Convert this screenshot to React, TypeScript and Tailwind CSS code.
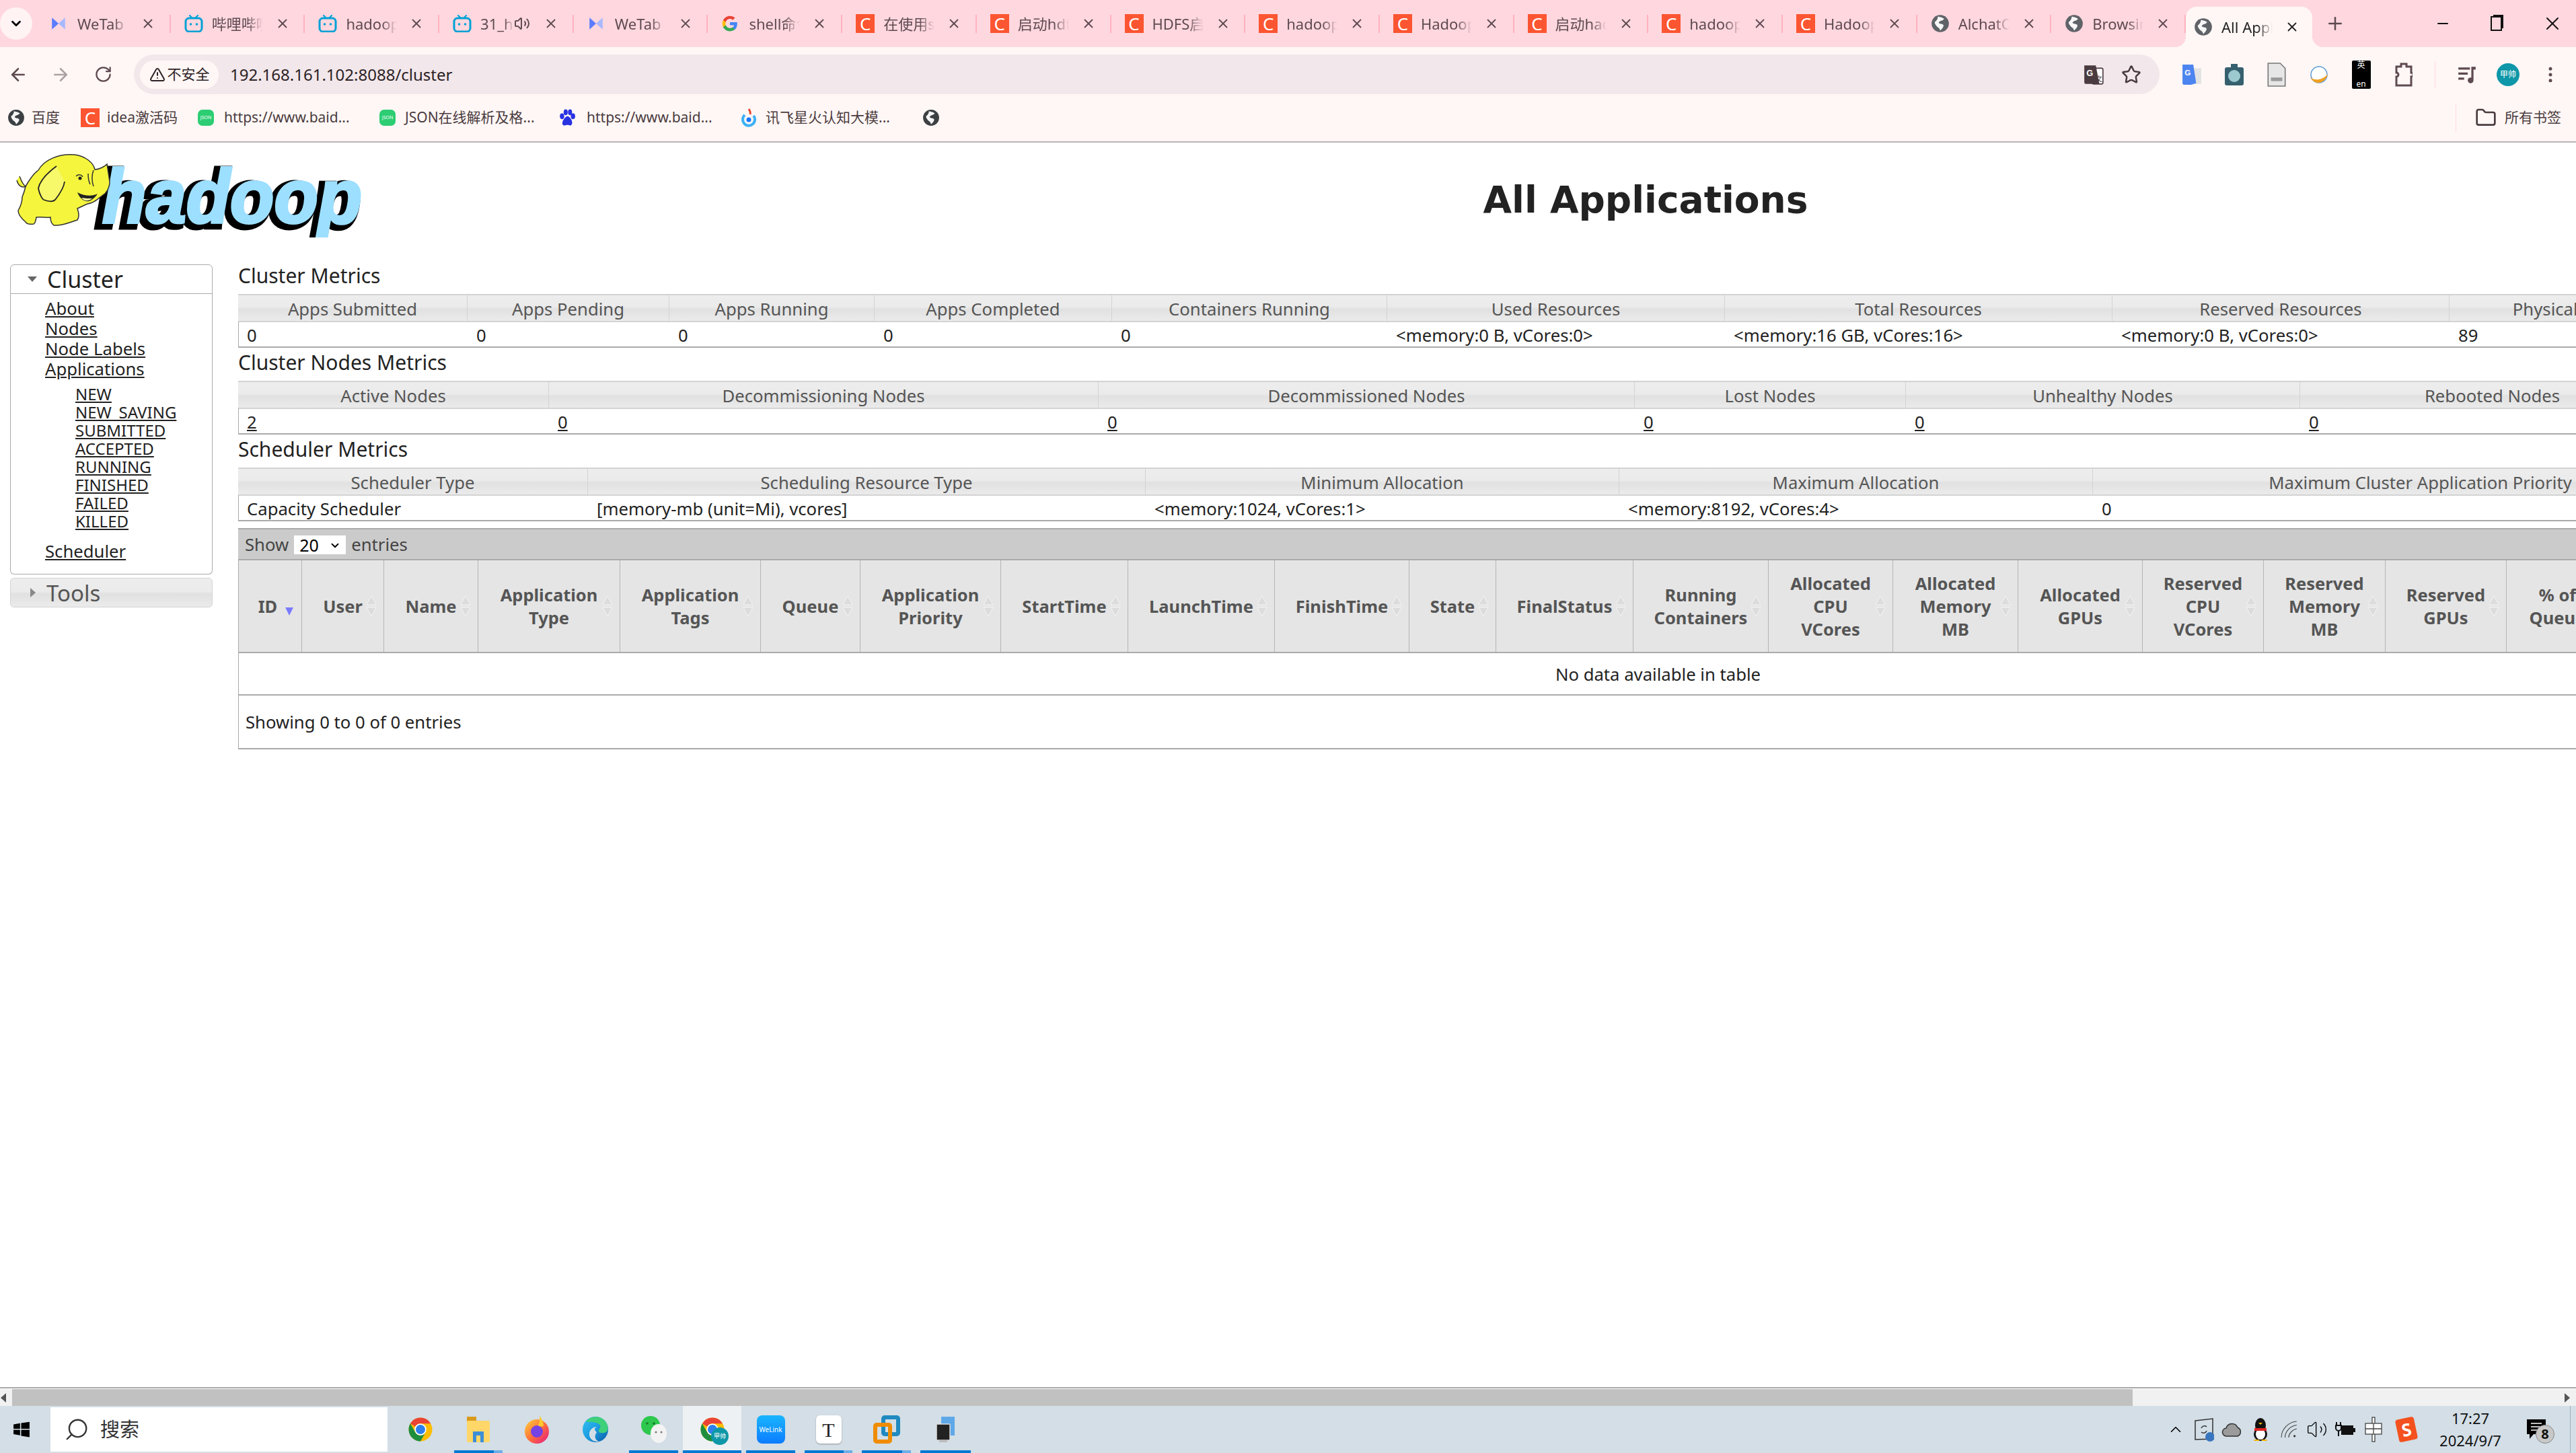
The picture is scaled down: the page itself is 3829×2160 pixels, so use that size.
import { ArrowLeft, ArrowRight, ChevronDown, ChevronUp, EllipsisVertical, Folder, Minus, Plus, RotateCw, Search, Star, TriangleAlert, Volume2, X } from "lucide-react";
import type { ReactNode } from "react";

const Csdn = ({ className = "h-[28px] w-[28px] text-[26px]" }: { className?: string }) => (
  <span className={`flex shrink-0 items-center justify-center bg-[#fc5531] leading-none text-white ${className}`}>C</span>
);

const WeTab = () => (
  <svg viewBox="0 0 24 24" className="h-[26px] w-[26px] shrink-0">
    <path d="M3 4l9 8-9 8z" fill="#5b7cff" />
    <path d="M21 4l-9 8 9 8z" fill="#a9b8ff" />
  </svg>
);

const Bili = () => (
  <svg viewBox="0 0 28 26" className="h-[26px] w-[28px] shrink-0" fill="none">
    <path d="M8 1l4 4M20 1l-4 4" stroke="#00a1d6" strokeWidth="2" strokeLinecap="round" />
    <rect x="2" y="5" width="24" height="20" rx="5" stroke="#00a1d6" strokeWidth="3" />
    <circle cx="9.5" cy="14" r="1.8" fill="#00a1d6" />
    <circle cx="18.5" cy="14" r="1.8" fill="#00a1d6" />
  </svg>
);

const Google = () => (
  <svg viewBox="0 0 48 48" className="h-[26px] w-[26px] shrink-0">
    <path fill="#4285f4" d="M44 24.5c0-1.500-.1-2.900-.4-4.300H24v8.200h11.200c-.5 2.600-2 4.900-4.200 6.400v5.300h6.800C41.800 36.900 44 31.200 44 24.500z" />
    <path fill="#34a853" d="M24 45c5.700 0 10.400-1.900 13.800-5.100L31 34.600c-1.900 1.300-4.300 2-7 2-5.400 0-10-3.600-11.600-8.500H5.400v5.400C8.800 40.300 15.900 45 24 45z" />
    <path fill="#fbbc05" d="M12.400 28.100c-.9-2.600-.9-5.500 0-8.100v-5.400H5.400c-2.900 5.900-2.900 13 0 18.900z" />
    <path fill="#ea4335" d="M24 11.300c3 0 5.800 1 7.900 3.100l6-6C34.300 5 29.500 3 24 3 15.900 3 8.800 7.700 5.400 14.600l7 5.400C14 15 18.600 11.300 24 11.300z" />
  </svg>
);

const Globe = ({ className = "h-[28px] w-[28px]", color = "#5f6368" }: { className?: string; color?: string }) => (
  <svg viewBox="0 0 24 24" className={`shrink-0 ${className}`}>
    <circle cx="12" cy="12" r="11" fill={color} />
    <path d="M9 3c3 1 6 1 8 3-2 3-6 2-7 5 1 2 5 1 6 3 1 2-2 5-4 7-1-3-2-4-4-5-1-2-3-3-3-6 2-1 4-4 4-7z" fill="#fff" opacity="0.95" />
  </svg>
);

const ChromeLogo = ({ className = "h-[42px] w-[42px]" }: { className?: string }) => (
  <svg viewBox="0 0 48 48" className={className}>
    <circle cx="24" cy="24" r="20" fill="#fbbc04" />
    <path d="M24 4a20 20 0 0 1 17.320 10H24a10 10 0 0 0-8.660 5L6.680 14A20 20 0 0 1 24 4z" fill="#ea4335" />
    <path d="M6.680 14A20 20 0 0 0 24 44l8.660-15a10 10 0 0 1-17.320 0z" fill="#1e8e3e" />
    <circle cx="24" cy="24" r="10" fill="#fff" />
    <circle cx="24" cy="24" r="8" fill="#2f80ed" />
  </svg>
);

type TabInfo = { icon: ReactNode; label: string; audio?: boolean; active?: boolean };

const tabs: TabInfo[] = [
  { icon: <WeTab />, label: "WeTab 新标签页" },
  { icon: <Bili />, label: "哔哩哔哩" },
  { icon: <Bili />, label: "hadoop集群" },
  { icon: <Bili />, label: "31_hadoop", audio: true },
  { icon: <WeTab />, label: "WeTab 新标签页" },
  { icon: <Google />, label: "shell命令" },
  { icon: <Csdn />, label: "在使用shell" },
  { icon: <Csdn />, label: "启动hdfs" },
  { icon: <Csdn />, label: "HDFS启动" },
  { icon: <Csdn />, label: "hadoop集群" },
  { icon: <Csdn />, label: "Hadoop集群" },
  { icon: <Csdn />, label: "启动hadoop" },
  { icon: <Csdn />, label: "hadoop启动" },
  { icon: <Csdn />, label: "Hadoop启动" },
  { icon: <Globe />, label: "AlchatOS" },
  { icon: <Globe />, label: "Browsing" },
  { icon: <Globe />, label: "All Applications", active: true },
];

function Tab({ icon, label, audio, active }: TabInfo) {
  return (
    <div className={`relative flex shrink-0 items-center ${active ? "h-[60px] w-[188px] self-end rounded-t-[16px] bg-[#fff7f5] pl-[12px] text-[#222]" : "h-full w-[199.7px] pl-[20px] text-[#5e4a51]"}`}>
      <span className="flex w-[41px] shrink-0 items-center">{icon}</span>
      <span className={`overflow-hidden whitespace-nowrap text-[22px] [mask-image:linear-gradient(to_right,black_70%,transparent)] ${audio ? "w-[50px]" : "w-[76px]"}`}>{label}</span>
      {audio && <Volume2 size={24} className="shrink-0" />}
      <X size={22} className={`shrink-0 ${audio ? "ml-[20px]" : "ml-[18px]"}`} />
      {!active && <span className="absolute right-0 top-[22px] h-[27px] w-[2px] bg-[#ffb2bf]" />}
      {active && (
        <>
          <span className="absolute bottom-0 left-[-16px] h-[16px] w-[16px] bg-[radial-gradient(circle_at_0_0,transparent_16px,#fff7f5_16px)]" />
          <span className="absolute bottom-0 right-[-16px] h-[16px] w-[16px] bg-[radial-gradient(circle_at_100%_0,transparent_16px,#fff7f5_16px)]" />
        </>
      )}
    </div>
  );
}

function TabStrip() {
  return (
    <div className="flex h-[70px] shrink-0 bg-[#ffd7df]">
      <div className="flex w-[54px] shrink-0 items-center pl-0">
        <span className="flex h-[48px] w-[48px] items-center justify-center rounded-full bg-[#fff3f4]">
          <ChevronDown size={22} strokeWidth={3} />
        </span>
      </div>
      {tabs.map((t, i) => (
        <Tab key={i} {...t} />
      ))}
      <div className="flex w-[68px] shrink-0 items-center justify-center text-[#5e4a51]">
        <Plus size={30} />
      </div>
      <div className="flex flex-1 items-center pl-[87px] text-[#111]">
        <span className="flex w-[77px] items-center justify-center"><Minus size={24} /></span>
        <span className="flex w-[83px] items-center justify-center">
          <span className="relative h-[22px] w-[17px] border-2 border-[#111] bg-[#ffd7df] shadow-[3px_-3px_0_-1px_#111]" />
        </span>
        <span className="flex w-[83px] items-center justify-center"><X size={32} strokeWidth={1.5} /></span>
      </div>
    </div>
  );
}

function TranslateIcon() {
  return (
    <svg viewBox="0 0 30 30" className="h-[32px] w-[32px]">
      <rect x="13" y="6" width="15" height="22" rx="2" fill="#fff" stroke="#4a3b40" strokeWidth="1.500" />
      <path d="M2 2h16l5 26H5a3 3 0 0 1-3-3z" fill="#4a3b40" />
      <text x="5" y="17" fontSize="12" fontWeight="700" fill="#fff" fontFamily="Liberation Sans, sans-serif">G</text>
      <text x="17" y="24" fontSize="10" fill="#4a3b40" fontFamily="Noto Sans CJK SC, sans-serif">文</text>
    </svg>
  );
}

function Toolbar() {
  return (
    <div className="flex h-[70px] shrink-0 items-start bg-[#fff7f5] pt-[11px]">
      <div className="flex h-[59px] items-center text-[#5e4a51]">
        <span className="flex w-[54px] justify-center"><ArrowLeft size={30} /></span>
        <span className="flex w-[72px] justify-center text-[#aaa1a4]"><ArrowRight size={30} /></span>
        <span className="flex w-[54px] justify-center"><RotateCw size={27} /></span>
      </div>
      <div className="ml-[19px] flex h-[59px] w-[3011px] items-center rounded-full bg-[#f2e7ea]">
        <span className="ml-[9px] flex h-[42px] w-[117px] items-center justify-center gap-[3px] rounded-full bg-[#fff7f5] text-[21px] text-[#2c2225]">
          <TriangleAlert size={24} />
          不安全
        </span>
        <span className="ml-[17px] text-[24px] leading-none text-[#2c2225]">192.168.161.102:8088/cluster</span>
        <span className="ml-auto flex w-[56px] justify-center"><TranslateIcon /></span>
        <span className="mr-[14px] flex w-[56px] justify-center text-[#4a3b40]"><Star size={30} /></span>
      </div>
      <div className="ml-[16px] flex h-[59px] items-center">
        <span className="flex w-[63px] justify-center">
          <svg viewBox="0 0 28 30" className="h-[34px] w-[30px]">
            <rect x="12" y="6" width="15" height="22" fill="#e3e3e3" />
            <path d="M1 1h15l4 26-7 2H3a2 2 0 0 1-2-2z" fill="#4d85f0" />
            <text x="4" y="16" fontSize="11" fontWeight="700" fill="#fff" fontFamily="Liberation Sans, sans-serif">G</text>
          </svg>
        </span>
        <span className="flex w-[63px] justify-center">
          <svg viewBox="0 0 30 34" className="h-[36px] w-[30px]">
            <rect x="10" y="1" width="10" height="6" fill="#37606e" />
            <rect x="1" y="6" width="28" height="27" rx="3" fill="#37606e" />
            <circle cx="15" cy="19" r="9" fill="#9cc8d0" />
          </svg>
        </span>
        <span className="flex w-[63px] justify-center">
          <svg viewBox="0 0 26 34" className="h-[36px] w-[28px]">
            <path d="M1 1h17l7 7v25H1z" fill="#e6e6e6" stroke="#777" strokeWidth="1.500" />
            <rect x="5" y="21" width="16" height="5" fill="#999" />
          </svg>
        </span>
        <span className="flex w-[63px] justify-center">
          <svg viewBox="0 0 30 30" className="h-[32px] w-[30px]" fill="none">
            <circle cx="15" cy="15" r="12" fill="#fff" stroke="#5b9bd5" strokeWidth="1.500" />
            <path d="M2 19c6 5 18 5 26-5-2 9-10 14-16 13-4-1-8-4-10-8z" fill="#f0a020" />
          </svg>
        </span>
        <span className="flex w-[63px] justify-center">
          <span className="flex h-[42px] w-[28px] flex-col items-center justify-between rounded-[2px] bg-black py-[1px] text-[12px] leading-none text-white">
            <span>英</span>
            <span>en</span>
          </span>
        </span>
        <span className="flex w-[63px] justify-center">
          <svg viewBox="0 0 26 36" className="h-[40px] w-[26px]" fill="none" stroke="#5e4a51" strokeWidth="3">
            <path d="M9 6V2h8v4h7v9a3 3 0 0 1 0 6v13H2V21a3 3 0 0 0 0-6V6z" />
          </svg>
        </span>
        <span className="ml-[15px] h-[40px] w-[1px] bg-[#ffd7df]" />
        <span className="ml-[15px] flex w-[62px] justify-center pl-[1px]">
          <svg viewBox="0 0 28 28" className="h-[32px] w-[30px]" fill="#5e4a51">
            <path d="M2 4h16v3H2zM2 11h13v3H2zM2 18h8v3H2z" />
            <path d="M20 3h6v4h-3v15a4 4 0 1 1-3-4z" />
          </svg>
        </span>
        <span className="flex w-[62px] justify-center">
          <span className="flex h-[34px] w-[34px] items-center justify-center rounded-full bg-[#0e97a8] text-[12px] text-white">甲帅</span>
        </span>
        <span className="flex w-[64px] justify-center text-[#5e4a51]"><EllipsisVertical size={30} /></span>
      </div>
    </div>
  );
}

function Bookmarks() {
  return (
    <div className="flex h-[72px] shrink-0 items-center border-b-2 border-[#b9b5b5] bg-[#fff7f5] text-[21px] text-[#4a3b40]">
      <span className="flex w-[120px] items-center gap-[10px] pl-[11px]"><Globe color="#3c4043" className="h-[26px] w-[26px]" />百度</span>
      <span className="flex w-[174px] items-center gap-[11px]"><Csdn />idea激活码</span>
      <span className="flex w-[270px] items-center gap-[15px]">
        <span className="flex h-[24px] w-[24px] items-center justify-center rounded-[7px] bg-[#2ccd73] text-[7px] text-white">JSON</span>
        https://www.baid...
      </span>
      <span className="flex w-[266px] items-center gap-[14px]">
        <span className="flex h-[24px] w-[24px] items-center justify-center rounded-[7px] bg-[#2ccd73] text-[7px] text-white">JSON</span>
        JSON在线解析及格...
      </span>
      <span className="flex w-[271px] items-center gap-[16px]">
        <svg viewBox="0 0 24 24" className="h-[28px] w-[26px]" fill="#2932e1">
          <ellipse cx="5" cy="10" rx="3" ry="4" />
          <ellipse cx="10" cy="4.500" rx="2.800" ry="4" />
          <ellipse cx="16" cy="4.500" rx="2.800" ry="4" />
          <ellipse cx="20" cy="10" rx="3" ry="4" />
          <path d="M12.500 10c3 0 8 7 6 11-2 3-4 1-6 1s-5 2-7-1c-1-4 4-11 7-11z" />
        </svg>
        https://www.baid...
      </span>
      <span className="flex w-[270px] items-center gap-[13px]">
        <svg viewBox="0 0 24 28" className="h-[34px] w-[24px]" fill="none">
          <path d="M12 1c2 3 3 5 2 8" stroke="#e8452c" strokeWidth="3" />
          <path d="M6 10a9 9 0 1 0 13 1" stroke="#3db1f5" strokeWidth="4" />
          <circle cx="12" cy="17" r="3.500" fill="#1677ff" />
        </svg>
        讯飞星火认知大模...
      </span>
      <Globe color="#3c4043" className="h-[26px] w-[26px]" />
      <span className="ml-auto flex items-center pr-[22px]">
        <span className="h-[40px] w-[1px] bg-[#ffd7df]" />
        <Folder size={32} className="ml-[28px]" />
        <span className="ml-[12px]">所有书签</span>
      </span>
    </div>
  );
}

function Elephant() {
  return (
    <g>
      <path d="M21 49C28 37 34 29 40 25C48 10 70 0 94 2C110 4 122 14 124 24C130 24 138 20 142 16L146 42C146 52 140 60 136 62C128 68 122 74 113 75L98 82C101 90 100 96 98 99C88 102 76 108 63 107C59 104 58 100 58 95C52 96 44 94 37 95C36 100 36 103 33 105C26 106 22 104 21 102C14 96 10 90 10 85C14 78 16 70 16 65C18 60 20 54 21 49Z" fill="#f4f53c" stroke="#333" strokeWidth="1.500" />
      <path d="M67 19C52 30 42 42 40 52C42 62 46 68 48 69C56 72 62 72 65 69C72 60 78 50 79 42" fill="#f7f86a" stroke="#222" strokeWidth="1.800" />
      <path d="M8 40C10 48 16 52 21 49C16 46 14 38 12 34" fill="#f4f53c" stroke="#333" strokeWidth="1.500" />
      <path d="M96 34c3-3 8-3 10 1M122 25c-3 8-2 18 0 24M114 30c0 6 1 12 3 16" fill="none" stroke="#333" strokeWidth="1.500" />
      <circle cx="102" cy="37" r="2.500" fill="#222" />
      <path d="M98 58c4 10 12 16 20 12 4-3 8-6 10-10-8 4-18 4-30-2z" fill="#222" />
      <path d="M104 66c4 5 10 6 16 1-6 0-10 0-16-1z" fill="#f9f9a0" />
    </g>
  );
}

function HadoopLogo() {
  return (
    <svg viewBox="0 0 525 125" className="h-[125px] w-[525px] shrink-0">
      <text x="128" y="107" textLength="388" lengthAdjust="spacingAndGlyphs" fontFamily="Liberation Sans, sans-serif" fontSize="114" fontStyle="italic" fontWeight="700" fill="#000" stroke="#000" strokeWidth="13">hadoop</text>
      <text x="135" y="103" textLength="386" lengthAdjust="spacingAndGlyphs" fontFamily="Liberation Sans, sans-serif" fontSize="114" fontStyle="italic" fontWeight="700" fill="#9ddfff" stroke="#9ddfff" strokeWidth="4">hadoop</text>
      <Elephant />
    </svg>
  );
}

const metricHead = "flex h-[38px] items-center justify-center overflow-hidden whitespace-nowrap border-r border-[#d3d3d3] bg-[linear-gradient(to_bottom,#ededed_0%,#ebebeb_45%,#e1e1e1_55%,#ebebeb_100%)] pt-[3px] text-[#555]";
const metricCell = "flex h-[36px] items-center whitespace-nowrap pl-[12px] pt-[4px]";

function MetricsTable({ title, cols, head, cells, links }: { title: string; cols: string; head: string[]; cells: string[]; links?: boolean }) {
  return (
    <div className="w-[4300px]">
      <div className="flex h-[49px] items-center pb-[5px] text-[30px] leading-none">{title}</div>
      <div className={`grid border-t-2 border-[#d3d3d3] ${cols}`}>
        {head.map((h) => (
          <div key={h} className={metricHead}>{h}</div>
        ))}
      </div>
      <div className={`grid border-l border-t-2 border-b-2 border-l-[#aaa] border-t-[#d3d3d3] border-b-[#aaa] ${cols}`}>
        {cells.map((c, i) => (
          <div key={i} className={metricCell}>{links ? <a className="underline">{c}</a> : c}</div>
        ))}
      </div>
    </div>
  );
}

function SortIcon({ active }: { active?: boolean }) {
  if (active) {
    return (
      <svg viewBox="0 0 14 16" className="absolute right-[12px] top-[calc(50%+1px)] h-[14px] w-[12px]">
        <path d="M0 1h14L7 15z" fill="#7b7bff" />
      </svg>
    );
  }
  return (
    <svg viewBox="0 0 16 32" className="absolute right-[10px] top-1/2 h-[32px] w-[16px] -translate-y-1/2">
      <path d="M8 1l7 13H1z" fill="#dcdcdc" stroke="#f4f4f4" />
      <path d="M8 31l7-13H1z" fill="#dcdcdc" stroke="#f4f4f4" />
    </svg>
  );
}

const appColumns: string[][] = [
  ["ID"], ["User"], ["Name"], ["Application", "Type"], ["Application", "Tags"], ["Queue"], ["Application", "Priority"],
  ["StartTime"], ["LaunchTime"], ["FinishTime"], ["State"], ["FinalStatus"], ["Running", "Containers"],
  ["Allocated", "CPU", "VCores"], ["Allocated", "Memory", "MB"], ["Allocated", "GPUs"],
  ["Reserved", "CPU", "VCores"], ["Reserved", "Memory", "MB"], ["Reserved", "GPUs"], ["% of", "Queue"], ["% of", "Cluster"],
];

function AppsTable() {
  return (
    <div className="mt-[10px] w-[4300px]">
      <div className="flex h-[48px] items-center gap-[8px] border-t-2 border-b-2 border-[#aaa] bg-[#cbcbcb] pl-[10px] pt-[2px] text-[#444]">
        Show
        <span className="relative flex">
          <select defaultValue="20" className="h-[28px] w-[77px] appearance-none bg-white pl-[8px] text-[25px] leading-none text-black outline-none">
            <option>20</option>
          </select>
          <ChevronDown size={18} strokeWidth={2.500} className="pointer-events-none absolute right-[7px] top-[6px] text-black" />
        </span>
        entries
      </div>
      <div className="grid h-[138px] grid-cols-[94px_122px_140px_211px_209px_148px_209px_189px_218px_200px_129px_204px_201px_185px_186px_185px_180px_181px_180px_152px_604px] border-b-2 border-l border-[#aaa] bg-[#e5e5e5] text-[25.5px] font-bold leading-[34px] text-[#555]">
        {appColumns.map((lines, i) => (
          <div key={i} className={`relative flex flex-col items-center justify-center border-r border-[#b5b5b5] ${i === 0 ? "pr-[7px]" : ""}`}>
            {lines.map((l) => (
              <span key={l}>{l}</span>
            ))}
            <SortIcon active={i === 0} />
          </div>
        ))}
      </div>
      <div className="flex h-[63px] w-[4220px] items-center justify-center border-b-2 border-l border-[#aaa] pt-[2px]">No data available in table</div>
      <div className="flex h-[80px] items-center border-b-2 border-l border-[#aaa] pl-[10px] pt-[2px]">Showing 0 to 0 of 0 entries</div>
    </div>
  );
}

function Sidebar() {
  const apps = ["NEW", "NEW_SAVING", "SUBMITTED", "ACCEPTED", "RUNNING", "FINISHED", "FAILED", "KILLED"];
  return (
    <aside className="ml-[15px] w-[301px] shrink-0">
      <div className="flex h-[44px] items-center rounded-t-[6px] border border-[#aaa] pl-[25px] text-[34px] leading-none text-[#222]">
        <svg viewBox="0 0 14 8" className="mr-[15px] h-[8px] w-[14px]"><path d="M0 0h14L7 8z" fill="#666" /></svg>
        Cluster
      </div>
      <div className="h-[417px] rounded-b-[6px] border border-t-0 border-[#aaa] pl-[51px] pt-[7px]">
        {["About", "Nodes", "Node Labels", "Applications"].map((l) => (
          <a key={l} className="block h-[30px] leading-[30px] underline">{l}</a>
        ))}
        <div className="ml-[45px] mt-[8px]">
          {apps.map((a) => (
            <a key={a} className="block h-[27px] text-[24px] leading-[27px] underline">{a}</a>
          ))}
        </div>
        <a className="mt-[17px] block h-[30px] leading-[30px] underline">Scheduler</a>
      </div>
      <div className="mt-[5px] flex h-[44px] items-center rounded-[6px] border border-[#d3d3d3] bg-[linear-gradient(to_bottom,#ededed_0%,#ebebeb_45%,#e1e1e1_55%,#ebebeb_100%)] pl-[29px] text-[33px] leading-none text-[#555]">
        <svg viewBox="0 0 8 14" className="mr-[16px] h-[14px] w-[8px]"><path d="M0 0l8 7-8 7z" fill="#888" /></svg>
        Tools
      </div>
    </aside>
  );
}

function Page() {
  return (
    <div className="min-h-0 flex-1 overflow-hidden bg-white text-[25.7px] leading-[30px] text-[#222]">
      <div className="flex h-[181px] w-[4350px] items-start pl-[17px] pt-[16px]">
        <HadoopLogo />
        <h1 className="flex-1 pt-[37px] text-center font-['DejaVu_Sans',sans-serif] text-[55px] font-bold leading-[64px] text-[#222]">All Applications</h1>
      </div>
      <div className="flex items-start">
        <Sidebar />
        <div className="ml-[38px] mt-[-5px] flex flex-col">
          <MetricsTable
            title="Cluster Metrics"
            cols="grid-cols-[341px_300px_305px_353px_409px_502px_576px_501px_450px]"
            head={["Apps Submitted", "Apps Pending", "Apps Running", "Apps Completed", "Containers Running", "Used Resources", "Total Resources", "Reserved Resources", "Physical Mem Used %"]}
            cells={["0", "0", "0", "0", "0", "<memory:0 B, vCores:0>", "<memory:16 GB, vCores:16>", "<memory:0 B, vCores:0>", "89"]}
          />
          <MetricsTable
            title="Cluster Nodes Metrics"
            cols="grid-cols-[462px_817px_797px_403px_586px_572px]"
            head={["Active Nodes", "Decommissioning Nodes", "Decommissioned Nodes", "Lost Nodes", "Unhealthy Nodes", "Rebooted Nodes"]}
            cells={["2", "0", "0", "0", "0", "0"]}
            links
          />
          <MetricsTable
            title="Scheduler Metrics"
            cols="grid-cols-[520px_829px_704px_704px_974px]"
            head={["Scheduler Type", "Scheduling Resource Type", "Minimum Allocation", "Maximum Allocation", "Maximum Cluster Application Priority"]}
            cells={["Capacity Scheduler", "[memory-mb (unit=Mi), vcores]", "<memory:1024, vCores:1>", "<memory:8192, vCores:4>", "0"]}
          />
          <AppsTable />
        </div>
      </div>
    </div>
  );
}

function PageScrollbar() {
  return (
    <div className="h-[28px] shrink-0 border-t-2 border-[#aaa] bg-white pt-[1px]">
      <div className="flex h-[25px] items-center bg-[#f1f1f1]">
        <svg viewBox="0 0 8 14" className="ml-[1px] mr-[9px] h-[14px] w-[8px]"><path d="M8 0v14L0 7z" fill="#555" /></svg>
        <div className="h-full w-[3152px] bg-[#c1c1c1]" />
        <svg viewBox="0 0 8 14" className="ml-auto mr-[9px] h-[14px] w-[8px]"><path d="M0 0v14l8-7z" fill="#555" /></svg>
      </div>
    </div>
  );
}

function TaskSlot({ width, active, children }: { width: string; active?: boolean; children: ReactNode }) {
  return (
    <div className={`relative flex h-full items-center justify-center ${width} ${active ? "bg-[#edf1f4]" : ""}`}>
      {children}
    </div>
  );
}

function Underline({ light }: { light?: boolean }) {
  return (
    <span className="absolute bottom-0 left-[7px] right-[7px] flex h-[4px]">
      <span className="flex-1 bg-[#0078d4]" />
      {light && <span className="w-[13px] bg-[#6caee8]" />}
    </span>
  );
}

function Taskbar() {
  return (
    <div className="flex h-[70px] shrink-0 items-center bg-[#d3dee6]">
      <div className="flex w-[75px] justify-center pr-[12px]">
        <svg viewBox="0 0 24 24" className="h-[32px] w-[26px]" fill="#000">
          <path d="M1 5l9-1.500V11H1zM11.500 3.200L23 1.500V11H11.500zM1 12.500h9V20l-9-1.500zM11.500 12.500H23v10l-11.500-1.700z" />
        </svg>
      </div>
      <div className="flex h-[66px] w-[501px] items-center bg-white pl-[20px] text-[29px] text-[#333]">
        <Search size={38} strokeWidth={1.5} className="-scale-x-100" />
        <span className="ml-[16px]">搜索</span>
      </div>
      <div className="ml-[5px] flex h-full items-center">
        <TaskSlot width="w-[87px]"><ChromeLogo /></TaskSlot>
        <TaskSlot width="w-[86px]">
          <svg viewBox="0 0 40 42" className="h-[42px] w-[40px]">
            <path d="M3 2h14v10H3z" fill="#d99a1c" />
            <rect x="3" y="8" width="34" height="32" rx="2" fill="#ffd768" />
            <path d="M12 24h16v16h-5V30h-6v10h-5z" fill="#3d8fd6" />
          </svg>
          <Underline light />
        </TaskSlot>
        <TaskSlot width="w-[87px]">
          <svg viewBox="0 0 40 44" className="h-[44px] w-[40px]">
            <defs>
              <linearGradient id="fx" x1="0" y1="0" x2="1" y2="1">
                <stop offset="0" stopColor="#ffd43b" />
                <stop offset="0.5" stopColor="#ff7139" />
                <stop offset="1" stopColor="#e31587" />
              </linearGradient>
            </defs>
            <circle cx="20" cy="25" r="18" fill="url(#fx)" />
            <path d="M24 1c3 6 6 9 6 16l-10 2c3-5 5-10 4-18z" fill="#ffc92e" />
            <circle cx="20" cy="25" r="9" fill="#7542e5" />
          </svg>
        </TaskSlot>
        <TaskSlot width="w-[87px]">
          <svg viewBox="0 0 40 42" className="h-[42px] w-[40px]">
            <defs>
              <linearGradient id="eg" x1="0" y1="0" x2="1" y2="1">
                <stop offset="0" stopColor="#35c1f1" />
                <stop offset="0.5" stopColor="#1b9de2" />
                <stop offset="1" stopColor="#0c59a4" />
              </linearGradient>
            </defs>
            <circle cx="20" cy="21" r="19" fill="url(#eg)" />
            <path d="M6 10C12 0 30-1 37 12c3 6 2 13-4 14-5 1-9-1-8-4 1-3 3-3 2-7-2-5-14-6-21-5z" fill="#3fd07a" />
            <path d="M22 25c-4 6-3 11 3 14-9 1-15-5-14-13 1-5 6-9 11-9-4 2-4 5 0 8z" fill="#d3dee6" />
          </svg>
        </TaskSlot>
        <TaskSlot width="w-[87px]">
          <svg viewBox="0 0 40 42" className="h-[42px] w-[40px]">
            <ellipse cx="15" cy="15" rx="14" ry="14" fill="#2dc84d" />
            <ellipse cx="27" cy="27" rx="12" ry="14" fill="#f3f3f3" />
            <circle cx="10" cy="12" r="1.800" fill="#1a7a30" />
            <circle cx="20" cy="12" r="1.800" fill="#1a7a30" />
            <circle cx="23" cy="25" r="1.500" fill="#777" />
            <circle cx="31" cy="25" r="1.500" fill="#777" />
          </svg>
          <Underline />
        </TaskSlot>
        <TaskSlot width="w-[87px]" active>
          <ChromeLogo />
          <span className="absolute left-[42px] top-[32px] flex h-[26px] w-[26px] items-center justify-center rounded-full bg-[#0e97a8] text-[9px] text-white">甲帅</span>
          <span className="absolute bottom-0 left-0 right-0 h-[4px] bg-[#0078d4]" />
        </TaskSlot>
        <TaskSlot width="w-[87px]">
          <span className="flex h-[42px] w-[42px] items-center justify-center rounded-[8px] bg-[linear-gradient(to_bottom,#19b5ff,#0c7cff)] text-[10px] text-white">WeLink</span>
          <Underline />
        </TaskSlot>
        <TaskSlot width="w-[85px]">
          <span className="flex h-[42px] w-[38px] items-center justify-center rounded-[6px] bg-white font-['Liberation_Serif',serif] text-[30px] text-[#222] shadow-[0_1px_2px_#0005]">T</span>
          <Underline light />
        </TaskSlot>
        <TaskSlot width="w-[87px]">
          <svg viewBox="0 0 40 42" className="h-[42px] w-[40px]" fill="none" strokeWidth="6">
            <rect x="15" y="3" width="22" height="25" rx="2" stroke="#1f8ac0" />
            <rect x="3" y="14" width="22" height="25" rx="2" stroke="#f08c00" />
          </svg>
          <Underline light />
        </TaskSlot>
        <TaskSlot width="w-[89px]">
          <svg viewBox="0 0 30 40" className="h-[40px] w-[30px]">
            <rect x="8" y="1" width="20" height="28" fill="#5fa8e8" />
            <rect x="1" y="12" width="20" height="24" rx="1" fill="#222" stroke="#ddd" strokeWidth="1.500" />
            <rect x="5" y="36" width="12" height="3" fill="#bbb" />
          </svg>
          <Underline />
        </TaskSlot>
      </div>
      <div className="ml-auto flex h-full items-center">
        <span className="flex w-[42px] justify-center"><ChevronUp size={26} strokeWidth={1.5} /></span>
        <span className="flex w-[42px] justify-center">
          <svg viewBox="0 0 30 36" className="h-[36px] w-[30px]" fill="none">
            <path d="M2 5l26-3v30l-26 1z" stroke="#333" strokeWidth="1.500" />
            <path d="M11 16a5 5 0 0 1 8-2M19 20a5 5 0 0 1-8 2" stroke="#333" strokeWidth="1.500" />
            <circle cx="24" cy="29" r="7" fill="#3a76bd" />
          </svg>
        </span>
        <span className="flex w-[42px] justify-center">
          <svg viewBox="0 0 32 24" className="h-[26px] w-[32px]">
            <path d="M8 22a6 6 0 0 1-1-12 9 9 0 0 1 17-1 7 7 0 0 1 0 13z" fill="#9b9b9b" stroke="#333" strokeWidth="1.500" />
          </svg>
        </span>
        <span className="flex w-[42px] justify-center">
          <svg viewBox="0 0 26 36" className="h-[38px] w-[26px]">
            <ellipse cx="13" cy="12" rx="8" ry="11" fill="#111" />
            <ellipse cx="13" cy="25" rx="10" ry="10" fill="#111" />
            <ellipse cx="13" cy="25" rx="7" ry="8" fill="#fff" />
            <path d="M4 16h18v4H4z" fill="#e02424" />
            <path d="M10 8h6l-3 3z" fill="#f5b301" />
            <path d="M4 33h7v2H3zM15 33h7l1 2h-8z" fill="#f5b301" />
          </svg>
        </span>
        <span className="flex w-[42px] justify-center pl-[2px]">
          <svg viewBox="0 0 24 24" className="h-[30px] w-[26px]" fill="none" stroke="#444" strokeWidth="1">
            <path d="M1 23C1 12 10 2 22 1M6 23C6 15 13 7 22 6M11 23c0-5 5-11 11-12" />
            <circle cx="19" cy="21" r="1.500" fill="#333" stroke="none" />
          </svg>
        </span>
        <span className="flex w-[42px] justify-center"><Volume2 size={32} strokeWidth={1} /></span>
        <span className="flex w-[42px] justify-center">
          <svg viewBox="0 0 30 24" className="h-[26px] w-[30px]">
            <rect x="9" y="6" width="18" height="14" fill="#111" />
            <rect x="27" y="10" width="3" height="6" fill="#111" />
            <path d="M2 1v5M8 1v5M1 6h8v4a4 4 0 0 1-8 0zM5 14v8" stroke="#111" strokeWidth="2" fill="none" />
          </svg>
        </span>
        <span className="flex w-[42px] justify-center">
          <svg viewBox="0 0 26 38" className="h-[38px] w-[26px]" fill="#fff" stroke="#444" strokeWidth="1.300">
            <rect x="11" y="1" width="4" height="36" />
            <rect x="1" y="10" width="24" height="16" />
            <path d="M13 10v16M1 18h24" fill="none" />
          </svg>
        </span>
        <span className="flex w-[56px] justify-center">
          <span className="flex h-[34px] w-[28px] -rotate-12 items-center justify-center rounded-[4px] bg-[#f4511e] text-[26px] font-bold leading-none text-white">S</span>
        </span>
        <div className="flex w-[134px] flex-col items-center text-[22px] leading-[33px] text-[#111]">
          <span>17:27</span>
          <span>2024/9/7</span>
        </div>
        <span className="relative flex w-[81px] justify-start pl-[17px]">
          <svg viewBox="0 0 28 30" className="h-[30px] w-[28px]">
            <path d="M0 0h28v22H10l-6 7v-7H0z" fill="#000" />
            <path d="M6 6h16M6 11h16M6 16h10" stroke="#fff" strokeWidth="1.500" />
          </svg>
          <span className="absolute left-[30px] top-[8px] flex h-[28px] w-[28px] items-center justify-center rounded-full border border-[#888] bg-[#c8c8c8] text-[20px] font-bold leading-none text-[#111]">8</span>
        </span>
        <span className="h-full w-[1px] bg-[#9fb0bc]" />
        <span className="w-[8px]" />
      </div>
    </div>
  );
}

export default function App() {
  return (
    <div className="flex h-[2160px] w-[3829px] flex-col overflow-hidden font-['Noto_Sans','Noto_Sans_CJK_SC',sans-serif]">
      <TabStrip />
      <Toolbar />
      <Bookmarks />
      <Page />
      <PageScrollbar />
      <Taskbar />
    </div>
  );
}
